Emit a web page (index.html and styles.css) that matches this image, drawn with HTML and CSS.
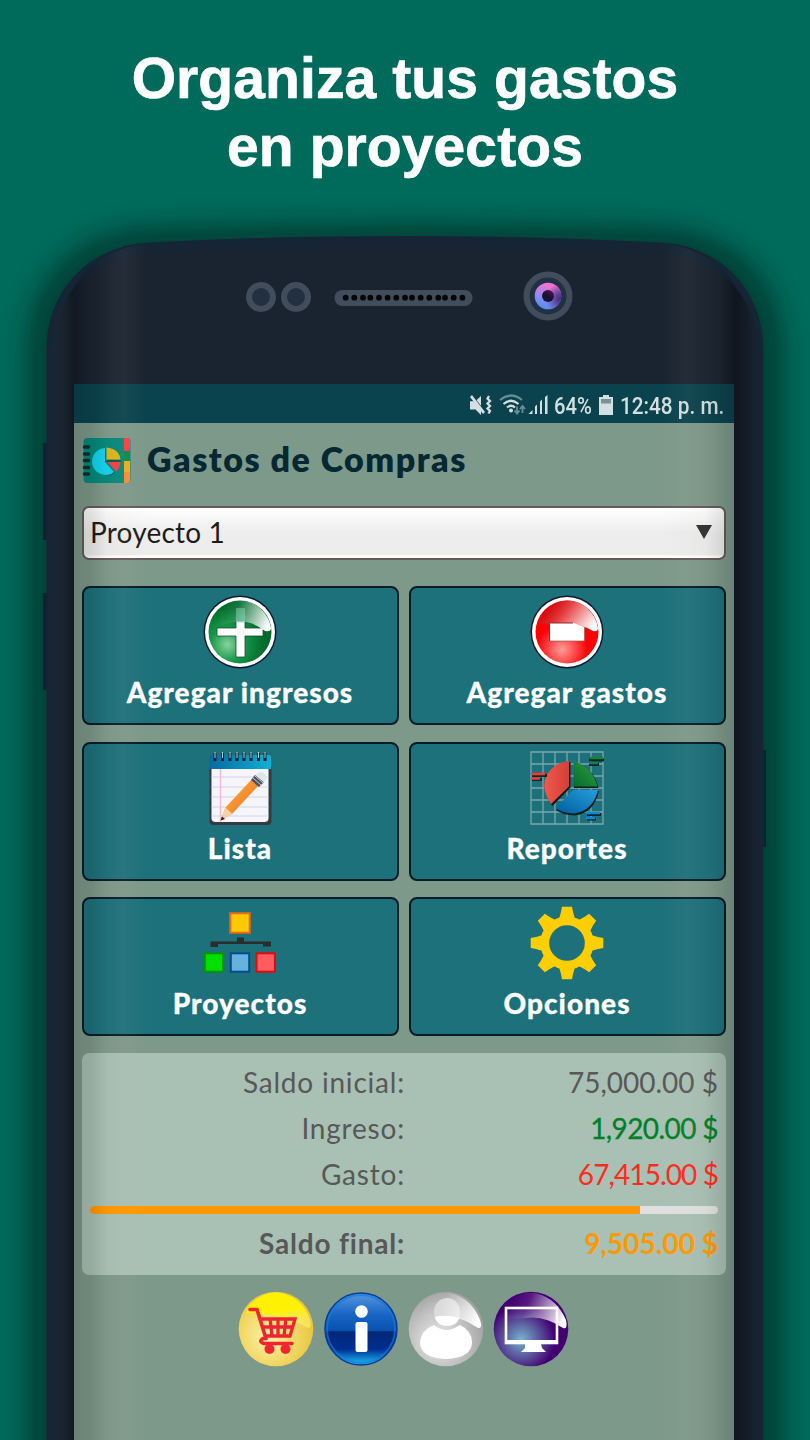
FILE: index.html
```html
<!DOCTYPE html>
<html lang="es">
<head>
<meta charset="utf-8">
<title>Gastos de Compras</title>
<link rel="stylesheet" href="styles.css">
</head>
<body>
<svg class="phone-body" width="810" height="1440" viewBox="0 0 810 1440" aria-hidden="true">
  <defs>
    <filter id="blur" x="-20%" y="-20%" width="140%" height="140%"><feGaussianBlur stdDeviation="12"/></filter>
    <linearGradient id="side" x1="46" x2="764" y1="0" y2="0" gradientUnits="userSpaceOnUse">
      <stop offset="0" stop-color="#17253a"/><stop offset=".009" stop-color="#182536"/><stop offset=".022" stop-color="#1b2633"/><stop offset=".039" stop-color="#151c26"/>
      <stop offset=".06" stop-color="#1a2430"/><stop offset=".94" stop-color="#1a2430"/><stop offset=".961" stop-color="#121a25"/><stop offset=".978" stop-color="#151e2a"/><stop offset=".985" stop-color="#172231"/><stop offset="1" stop-color="#172534"/>
    </linearGradient>
    <linearGradient id="lens" x1="0" y1="1" x2="0.35" y2="0"><stop offset="0" stop-color="#3d8ff0"/><stop offset=".5" stop-color="#8f8cf2"/><stop offset="1" stop-color="#fb70cf"/></linearGradient>
    <radialGradient id="lensShade" cx="1" cy=".6" r=".6"><stop offset="0" stop-color="#3a2a80"/><stop offset=".35" stop-color="#4b3285" stop-opacity=".8"/><stop offset="1" stop-color="#4b3285" stop-opacity="0"/></radialGradient>
    <linearGradient id="pupil" x1="0" y1="1" x2=".8" y2="0"><stop offset="0" stop-color="#0c1e4a"/><stop offset=".5" stop-color="#171230"/><stop offset="1" stop-color="#5a1040"/></linearGradient>
  </defs>
  <path d="M26 1500V350C26 275 78 230 150 226Q405 219 660 226C732 230 784 275 784 350V1500Z" fill="#001a17" opacity=".52" filter="url(#blur)"/>
  <path d="M47 443h-4v97h4zM47 593h-4v97h4zM763 750h3v97h-3z" fill="#0d2430"/>
  <path d="M46.5 1450V350C46.5 290 90 245 150 242.500Q270 236 405 236T660 242.500C720 245 763.500 290 763.500 350V1450Z" fill="#152535"/>
  <path d="M49 1450V362C49 296 92 257 148 253Q270 246.500 405 246.500T662 253C718 257 761 296 761 362V1450Z" fill="url(#side)"/>
  <g fill="#223041" stroke="#414d5a" stroke-width="6"><circle cx="261" cy="297" r="12"/><circle cx="296" cy="297" r="12"/></g>
  <rect x="334.500" y="290" width="138" height="16" rx="8" fill="#414d5a"/>
  <path d="M345.700 297.700h.01M354.300 297.700h.01M363 297.700h.01M370.300 297.700h.01M379 297.700h.01M387.600 297.700h.01M396.300 297.700h.01M405 297.700h.01M412 297.700h.01M420.700 297.700h.01M429.300 297.700h.01M438.300 297.700h.01M445 297.700h.01M453.700 297.700h.01M462.400 297.700h.01" stroke="#04060a" stroke-width="5.800" stroke-linecap="round"/>
  <circle cx="548" cy="296" r="21.500" fill="#213044" stroke="#414d5a" stroke-width="6"/>
  <circle cx="548" cy="296" r="13.300" fill="url(#lens)"/><circle cx="548" cy="296" r="13.300" fill="url(#lensShade)"/>
  <circle cx="548" cy="296" r="6" fill="url(#pupil)"/>
</svg>

<h1 class="headline">Organiza tus gastos<br>en proyectos</h1>

<main class="screen">
  <div class="status">
    <svg class="status-icons" width="82" height="26" viewBox="0 0 82 26" fill="#d3dfe2">
      <path d="M2 8.500h5l6-5.500v19l-6-6H2z"/><path d="M3.500 2l13 17" stroke="#0a434d" stroke-width="2"/><path d="M2 4l2-2 13 17-2 2z"/><path d="M2 8.500h5v8H2z"/>
      <path d="M21 3l-1.500 2.500L22 8l-2.500 2.500L22 13l-2.500 2.500L22 18l-1.500 2.500" fill="none" stroke="#d3dfe2" stroke-width="2.300"/>
      <g fill="none" stroke-width="2.200"><path d="M32 7Q43-2 54 7" stroke="#698d93"/><path d="M35.500 11Q43 4.500 50.500 11M39 14.500Q43 11 47 14.500" stroke="#d3dfe2"/></g><circle cx="43" cy="17.500" r="2"/>
      <path d="M49 13.500v6M46.500 17.500l2.500 3 2.500-3M54.500 20v-6M52 16l2.500-3 2.500 3" fill="none" stroke="#698d93" stroke-width="1.800"/>
      <path d="M60.500 21l4-4v4zM67 21V13.500l2-2V21zM72 21V8.500l2-2V21zM77 21V4l2.500-2v19z"/>
    </svg>
    <span class="battery-level">64%</span>
    <svg class="battery" width="14" height="20" viewBox="0 0 14 20"><path d="M4 0h6v2h4v18H0V2h4z" fill="#d3dfe2"/><path d="M2 4h10v4.500H2z" fill="#789297"/></svg>
    <span class="clock">12:48 p. m.</span>
  </div>

  <header class="app-header">
    <svg width="49" height="47" viewBox="0 0 49 47">
      <rect x="1.500" y="1" width="47" height="45" rx="4" fill="#04897b"/>
      <path d="M42 1h3q3 0 3 3v10h-6z" fill="#ff3d43"/><path d="M42 14h6v10h-6z" fill="#0d8a4d"/><path d="M42 24h6v11h-6z" fill="#f1ad16"/><path d="M42 35h6v8q0 3-3 3h-3z" fill="#ff8935"/>
      <path d="M2.500 10h4M2.500 17h4M2.500 23.500h4M2.500 30.500h4M2.500 37h4" stroke="#0c3033" stroke-width="3.500" stroke-linecap="round"/>
      <path d="M24 26V11.500a13.500 13.500 0 1 0 9 24z" fill="#053b3d" opacity=".5"/>
      <path d="M23 25V11a13.500 13.500 0 1 0 9 24z" fill="#12d3ed"/><path d="M24.500 22.500V10.500q12.500 1 14 12z" fill="#dfb516"/><path d="M25.500 25h13q-.5 6-4.500 9.500z" fill="#f73f44"/><path d="M24.500 24h14.500" stroke="#173f3b" stroke-width="1.500"/>
    </svg>
    <h2 class="app-title">Gastos de Compras</h2>
  </header>

  <div class="select"><span class="select-text">Proyecto 1</span><svg width="16" height="14" viewBox="0 0 16 14"><path d="M0 0h16L8 14z" fill="#333"/></svg></div>

  <nav class="tiles">
    <div class="tile">
      <svg width="74" height="74" viewBox="0 0 74 74">
        <defs><radialGradient id="gr" cx=".3" cy=".7" r=".6"><stop offset="0" stop-color="#8ad39c"/><stop offset=".45" stop-color="#159748"/><stop offset="1" stop-color="#00692b"/></radialGradient>
        <linearGradient id="gl" x1=".1" y1=".4" x2="1" y2=".6"><stop offset="0" stop-color="#fff" stop-opacity="0"/><stop offset=".3" stop-color="#fff" stop-opacity=".1"/><stop offset="1" stop-color="#fff"/></linearGradient></defs>
        <circle cx="37" cy="37" r="36.500" fill="#101b32"/><circle cx="37" cy="37" r="35" fill="#fff"/><circle cx="37" cy="37" r="31.500" fill="url(#gr)"/>
        <path d="M33 26h9v7h18v8H42v21h-9V41H14v-8h19z" fill="#fff" stroke="#174c3a" stroke-width=".8"/>
        <path d="M13 17Q24 5 38 5.500C54 6 66 19 68 33q0 4-6 3Q45 23 28 28L11 31z" fill="url(#gl)"/><path d="M33 13h9v15h-9z" fill="#8fe0c4" opacity=".45"/>
      </svg>
      <span class="tile-label">Agregar ingresos</span>
    </div>
    <div class="tile">
      <svg width="74" height="74" viewBox="0 0 74 74">
        <defs><radialGradient id="rr" cx=".42" cy=".78" r=".4"><stop offset="0" stop-color="#ff9c98"/><stop offset="1" stop-color="#fb0205"/></radialGradient>
        <linearGradient id="rl" x1=".1" y1=".3" x2="1" y2=".65"><stop offset="0" stop-color="#b70c12" stop-opacity=".5"/><stop offset=".4" stop-color="#e74b4c"/><stop offset="1" stop-color="#fff"/></linearGradient></defs>
        <circle cx="37" cy="37" r="36.500" fill="#101b32"/><circle cx="37" cy="37" r="35" fill="#fff"/><circle cx="37" cy="37" r="31.500" fill="url(#rr)"/>
        <path d="M13 17Q24 5 38 5.500C54 6 66 19 68 33q0 4-5 3Q48 27 30 28L8 29z" fill="url(#rl)"/>
        <path d="M19.500 28h24l11 4v14h-35z" fill="#fff"/><path d="M19.500 46V28H43" fill="none" stroke="#8e2f35"/><path d="M20 46h34.500V32" fill="none" stroke="#a55" stroke-width=".7"/>
      </svg>
      <span class="tile-label">Agregar gastos</span>
    </div>
    <div class="tile">
      <svg width="74" height="74" viewBox="0 0 74 74">
        <defs><linearGradient id="nb"><stop offset="0" stop-color="#066ba0"/><stop offset="1" stop-color="#0eb0d5"/></linearGradient><linearGradient id="pc" x1="0" y1="0" x2="1" y2="1"><stop offset="0" stop-color="#ffb24c"/><stop offset="1" stop-color="#e96e13"/></linearGradient></defs>
        <path d="M6.500 15h62v55q0 4-4 4h-54q-4 0-4-4z" fill="#343a40"/><path d="M8.500 15h57v52q0 4-4 4h-49q-4 0-4-4z" fill="#f5f5fa"/>
        <path d="M8.500 26h57M8.500 36h57M8.500 46h57M8.500 56h57M8.500 65h57" stroke="#d3d3ee"/><path d="M17.500 18v53" stroke="#fbb9cf" stroke-width="1.500"/>
        <path d="M6 6q0-2 2-2h58q2 0 2 2v12H6z" fill="url(#nb)"/>
        <path d="M12 2v8M19.500 2v8M27 2v8M34 2v8M41 2v8M48 2v8M55.500 2v8M62 2v8" stroke="#142530" stroke-width="3"/><path d="M12 1v6M19.500 1v6M27 1v6M34 1v6M41 1v6M48 1v6M55.500 1v6M62 1v6" stroke="#b9cdd4" stroke-width="1"/>
        <path d="M17.500 69.500l5-13L49 28l7 6-27 29z" fill="url(#pc)"/><path d="M17.500 69.500l5-13 7 6.500z" fill="#f4d2a8"/><path d="M17.500 69.500l1.500-4 3 2.500z" fill="#202020"/>
        <path d="M48 29l4-5 9 7-5 5z" fill="#4a545b"/><path d="M50 27l8 7M52 25l8 7" stroke="#c5cdd2" stroke-width="1"/><path d="M52.500 24l4-3q2-1 5 1.500t2 4.500l-2.500 4.500z" fill="#dde6ea"/>
      </svg>
      <span class="tile-label">Lista</span>
    </div>
    <div class="tile">
      <svg width="74" height="74" viewBox="0 0 74 74">
        <defs><linearGradient id="p1"><stop offset="0" stop-color="#ee5a4d"/><stop offset="1" stop-color="#d33f36"/></linearGradient><linearGradient id="p2" x1="1" y1="0" x2="0" y2="1"><stop offset="0" stop-color="#2f9f41"/><stop offset="1" stop-color="#046c2c"/></linearGradient><linearGradient id="p3" x1="0" y1="1" x2="1" y2="0"><stop offset="0" stop-color="#005d9e"/><stop offset="1" stop-color="#249ddd"/></linearGradient></defs>
        <path d="M1 1h72v72H1zM13 1v72M25 1v72M37 1v72M49 1v72M61 1v72M1 13h72M1 25h72M1 37h72M1 49h72M1 61h72" fill="none" stroke="#7ea5ad" stroke-width="1.300"/>
        <g fill="#101c22"><path d="M40.500 36.500L22.500 55Q9 37 18 23 26 12 40.500 11z"/><path d="M44 37V11.500q20 5 24.500 25.500z"/><path d="M26 59L43 40h26Q64 62 45 64.500q-12-.5-19-5.500z"/></g>
        <path d="M39 35.500L21 53Q9 36 18 22 26 11 39 10z" fill="url(#p1)"/><path d="M43.500 35.500V10.500q19 5 24 25z" fill="url(#p2)"/><path d="M25.500 57L43 39h25Q63 60 44 62.500q-12-.5-18.500-5.500z" fill="url(#p3)"/>
        <path d="M2 24.500h15M2 28.500h10M59 9h15M59 13.500h10M57 63.500h14M57 68h9" stroke="#10262b" stroke-width="3"/><path d="M1 23h14M1 27.500h9" stroke="#f33b34" stroke-width="2.500"/><path d="M60 7h13M59 12h9" stroke="#15843a" stroke-width="2.500"/><path d="M56 62h14M56 67h9" stroke="#0a8ad6" stroke-width="2.500"/>
      </svg>
      <span class="tile-label">Reportes</span>
    </div>
    <div class="tile">
      <svg width="74" height="74" viewBox="0 0 74 74">
        <rect x="27.300" y="7.300" width="19.400" height="19.400" fill="#ffc800" stroke="#f46811" stroke-width="2"/>
        <path d="M34 31.500h7v4h27v5h-8V38H15v3H7.500v-5.500H34z" fill="#2c2c2d"/>
        <rect x="1.800" y="47.300" width="18.400" height="18.400" fill="#00e000" stroke="#079607" stroke-width="2"/><rect x="27.800" y="47.300" width="18.400" height="18.400" fill="#67b1df" stroke="#034c91" stroke-width="2"/><rect x="53.500" y="47.300" width="18.400" height="18.400" fill="#ff5c60" stroke="#e3080d" stroke-width="2"/>
      </svg>
      <span class="tile-label">Proyectos</span>
    </div>
    <div class="tile">
      <svg width="74" height="74" viewBox="-37 -37 74 74" fill="#ffce00">
        <defs><path id="tooth" d="M-8-24l2-7 1-5.300h10L6-31l2 7z"/></defs>
        <circle r="22.200" fill="none" stroke="#ffce00" stroke-width="8.800"/>
        <use href="#tooth"/><use href="#tooth" transform="rotate(45)"/><use href="#tooth" transform="rotate(90)"/><use href="#tooth" transform="rotate(135)"/><use href="#tooth" transform="rotate(180)"/><use href="#tooth" transform="rotate(225)"/><use href="#tooth" transform="rotate(270)"/><use href="#tooth" transform="rotate(315)"/>
      </svg>
      <span class="tile-label">Opciones</span>
    </div>
  </nav>

  <section class="summary">
    <div class="row"><span class="label">Saldo inicial:</span><span class="value">75,000.00 $</span></div>
    <div class="row"><span class="label">Ingreso:</span><span class="value income">1,920.00 $</span></div>
    <div class="row"><span class="label">Gasto:</span><span class="value expense">67,415.00 $</span></div>
    <div class="progress"><div class="progress-fill"></div></div>
    <div class="row total"><span class="label">Saldo final:</span><span class="value">9,505.00 $</span></div>
  </section>

  <footer class="links">
    <svg width="76" height="76" viewBox="0 0 76 76">
      <defs><radialGradient id="y1" cx=".4" cy=".6" r=".6"><stop offset="0" stop-color="#fff3a8"/><stop offset="1" stop-color="#e9c63c"/></radialGradient><linearGradient id="y2" x1="0" x2=".3" y1="0" y2="1"><stop offset="0" stop-color="#fff100"/><stop offset=".6" stop-color="#fff200"/><stop offset="1" stop-color="#fff36a" stop-opacity=".6"/></linearGradient></defs>
      <circle cx="38" cy="38" r="37.300" fill="url(#y1)"/><path d="M11 15Q26-1 43 2 65 7 72 29q2 8-2 8-15-8-28-11-16-4-34-4z" fill="url(#y2)"/>
      <g fill="none" stroke="#ef2632"><path d="M12 18.500h7l9 29h-3q-5 3 1 5h28" stroke-width="3.600" stroke-linecap="round" stroke-linejoin="round"/><path d="M23 28h34l-5 17H28M24 36h30M32 27l2 18M40 27v18M48 27l-2 18" stroke-width="3.300"/></g><circle cx="31.500" cy="58" r="5" fill="#ef2632"/><circle cx="47.500" cy="58" r="5" fill="#ef2632"/>
    </svg>
    <svg width="76" height="76" viewBox="0 0 76 76">
      <defs><linearGradient id="b1" x1="0" y1="0" x2="0" y2="1"><stop offset="0" stop-color="#5997e0"/><stop offset=".3" stop-color="#1765c4"/><stop offset=".52" stop-color="#0752af"/><stop offset=".54" stop-color="#012876"/><stop offset=".78" stop-color="#002e91"/><stop offset="1" stop-color="#1dc4fa"/></linearGradient></defs>
      <circle cx="38" cy="38" r="36" fill="url(#b1)" stroke="#0b3c91" stroke-width="1.500"/><circle cx="38" cy="38" r="34" fill="none" stroke="#137bdc" stroke-width="1.800" opacity=".7"/><circle cx="38.500" cy="20.500" r="6.300" fill="#fff"/><rect x="32.500" y="31" width="12" height="30" rx="2" fill="#fff"/>
    </svg>
    <svg width="76" height="76" viewBox="0 0 76 76">
      <defs><radialGradient id="w1" cx=".4" cy=".65" r=".65"><stop offset="0" stop-color="#eee"/><stop offset="1" stop-color="#a1a1a1"/></radialGradient></defs>
      <circle cx="38" cy="38" r="37.300" fill="url(#w1)"/><ellipse cx="39" cy="21" rx="13" ry="14" fill="#d8d8d8"/><path d="M26.500 26q12-3 25 1-3 8-12.500 8t-12.500-9z" fill="#fff"/><path d="M11 14Q27-1 44 2.500 64 8 72 29q3 9-2 8Q51 24 33 26L8 26z" fill="url(#gl)"/><path d="M26 34q12 10 26 0 12 6 12 17 0 16-26 17Q12 67 12 51q1-12 14-17z" fill="#fff"/>
    </svg>
    <svg width="76" height="76" viewBox="0 0 76 76">
      <defs><radialGradient id="v1" cx=".37" cy=".64" r=".45"><stop offset="0" stop-color="#74b4cd"/><stop offset=".5" stop-color="#5c5c9f"/><stop offset="1" stop-color="#430071"/></radialGradient></defs>
      <circle cx="38" cy="38" r="37.300" fill="url(#v1)"/><path d="M11 14Q27-1 44 2.500 64 8 73 29q2 10-3 8Q51 24 33 27L8 29z" fill="url(#gl)"/><rect x="13" y="17" width="51" height="35" fill="none" stroke="#fff" stroke-width="2.600"/><path d="M12 49h53v4H48l1 4 4 4H28l4-4V53H12z" fill="#fff"/>
    </svg>
  </footer>
</main>
<div class="sheen"></div>
</body>
</html>
```

FILE: styles.css
```css
* { box-sizing: border-box; }
body { margin: 0; width: 810px; height: 1440px; overflow: hidden; position: relative; background: #006b5b; font-family: Lato, sans-serif; }
svg { display: block; flex: none; }

/* Phone frame drawn behind the content */
.phone-body { position: absolute; inset: 0; z-index: -1; }
.sheen {
  position: absolute; left: 55px; right: 55px; top: 236px; bottom: 0; pointer-events: none;
  clip-path: path("M0 1204V112C4 48 42 12 95 7H605C658 12 696 48 700 112V1204Z");
  background: linear-gradient(90deg, transparent 0, rgba(0,0,0,.14) 19px, rgba(0,0,0,.11) 36px, rgba(120,100,90,.04) 52px, rgba(210,190,180,.06) 68px, transparent 92px, transparent 606px, rgba(210,190,180,.05) 632px, rgba(120,100,90,.04) 650px, rgba(0,0,0,.15) 679px, transparent 700px);
}

.headline { margin: 0; padding-top: 44px; height: 181px; text-align: center; font: bold 57px/68px "Liberation Sans", Arial, sans-serif; letter-spacing: .1px; color: #fff; -webkit-text-stroke: .7px #fff; }

.screen { width: 660px; height: 1056px; margin: 203px 0 0 74px; background: #7d998a; }

.status { height: 39px; background: #0a434d; display: flex; align-items: center; justify-content: flex-end; padding: 4px 11px 0 0; color: #d3dfe2; font: 500 24px/36px Roboto, sans-serif; }
.status-icons { margin-right: 4px; }
.battery { margin: 0 7px; transform: translateY(-1px); }
.battery-level, .clock { display: inline-block; white-space: nowrap; transform-origin: 0 50%; }
.battery-level { width: 38px; transform: scaleX(.84); }
.clock { width: 103px; transform: scaleX(.865); }

.app-header { height: 83px; padding: 14px 8px 0; display: flex; gap: 16px; }
.app-title { margin: 0; font-size: 34px; line-height: 43px; font-weight: 800; color: #052833; letter-spacing: 1.5px; white-space: nowrap; }

.select { height: 54px; margin: 0 8px; padding: 0 12px 3px 6px; display: flex; align-items: center; justify-content: space-between; border: 2px solid #665b5b; border-radius: 7px; background: linear-gradient(#fff 0, #ededed 50%, #ededed 94%, #fff 96%); font-size: 28px; color: #1c1c1c; }
.select-text { letter-spacing: .2px; }

.tiles { display: grid; grid-template-columns: 317px 317px; grid-auto-rows: 139px; gap: 16.7px 10px; padding: 26px 8px 0; }
.tile { border: 2px solid #071c28; border-radius: 8px; background: #1d717b; display: flex; flex-direction: column; align-items: center; padding: 7px 1px 0 0; }
.tile-label { margin-top: 6px; font-size: 28px; line-height: 34px; font-weight: 900; letter-spacing: 1.05px; color: #fff; white-space: nowrap; -webkit-text-stroke: .3px #fff; }

.summary { height: 222.5px; margin: 16.6px 8px 0; padding: 6px 8px 0; border-radius: 7px; background: #a9c0b4; }
.row { display: flex; height: 46px; line-height: 46px; font-size: 28px; color: #585858; }
.label { width: 315px; text-align: right; white-space: nowrap; letter-spacing: .8px; }
.value { flex: 1; text-align: right; white-space: nowrap; }
.income { color: #008026; letter-spacing: -.6px; -webkit-text-stroke: .3px #008026; }
.expense { color: #ff2a1c; letter-spacing: -.9px; }
.progress { height: 8px; margin: 9px 0 0; border-radius: 4px; background: #e0e0e0; overflow: hidden; }
.progress-fill { width: 550px; height: 100%; background: #ff9800; }
.total { font-weight: 700; margin-top: 6px; }
.total .value { color: #ff9800; }

.links { display: flex; justify-content: center; gap: 9px; padding: 16px 1px 0 0; }
```
